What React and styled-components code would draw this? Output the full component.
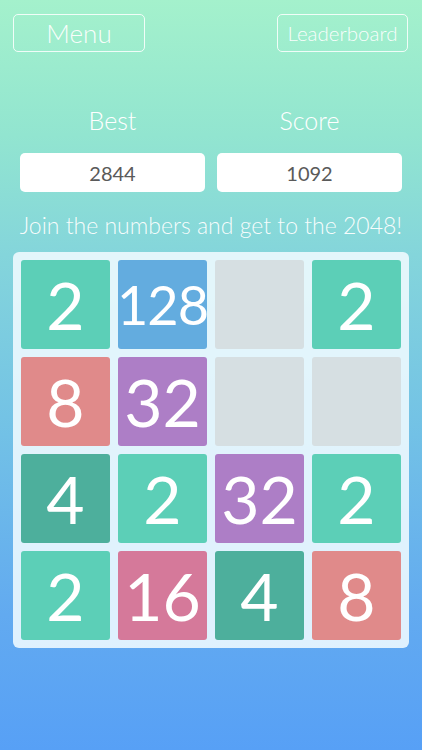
import React from "react";
import styled, { createGlobalStyle } from "styled-components";

const GlobalStyle = createGlobalStyle`
  html, body {
    margin: 0;
    padding: 0;
  }
  body {
    font-family: "Lato", "Open Sans", sans-serif;
  }
`;

const board = [
  [2, 128, 0, 2],
  [8, 32, 0, 0],
  [4, 2, 32, 2],
  [2, 16, 4, 8],
];

const tileColors = {
  0: "#d6dfe2",
  2: "#5ccfb7",
  4: "#4daf9c",
  8: "#e08a8a",
  16: "#d5799a",
  32: "#ad7ec6",
  128: "#63acdf",
};

const App = () => {
  return (
    <Screen>
      <GlobalStyle />
      <TopBar>
        <OutlineButton $w={132} $size={26}>Menu</OutlineButton>
        <OutlineButton $w={131} $size={20.5}>Leaderboard</OutlineButton>
      </TopBar>
      <Scores>
        <ScoreCol>
          <Label>Best</Label>
          <ScoreBox>2844</ScoreBox>
        </ScoreCol>
        <ScoreCol>
          <Label>Score</Label>
          <ScoreBox>1092</ScoreBox>
        </ScoreCol>
      </Scores>
      <Tagline>Join the numbers and get to the 2048!</Tagline>
      <Board>
        {board.flat().map((v, i) => (
          <Tile key={i} $bg={tileColors[v]} $small={v >= 100}>
            {v ? v : ""}
          </Tile>
        ))}
      </Board>
    </Screen>
  );
};

const Screen = styled.div`
  width: 422px;
  height: 750px;
  overflow: hidden;
  background: linear-gradient(
    180deg,
    #a4f1cc 0%,
    #92e5d0 18%,
    #84d5db 34%,
    #72c1e6 58%,
    #62aaf0 82%,
    #57a0f6 100%
  );
  display: flex;
  flex-direction: column;
`;

const TopBar = styled.div`
  display: flex;
  justify-content: space-between;
  padding: 14px 14px 0 13px;
`;

const OutlineButton = styled.div`
  width: ${(p) => p.$w}px;
  height: 38px;
  box-sizing: border-box;
  border: 1.5px solid rgba(255, 255, 255, 0.85);
  border-radius: 5px;
  color: rgba(255, 255, 255, 0.95);
  font-size: ${(p) => p.$size}px;
  font-weight: 300;
  display: flex;
  align-items: center;
  justify-content: center;
  white-space: nowrap;
`;

const Scores = styled.div`
  display: flex;
  justify-content: space-between;
  padding: 0 20px;
  margin-top: 53px;
`;

const ScoreCol = styled.div`
  width: 185px;
  display: flex;
  flex-direction: column;
  align-items: center;
`;

const Label = styled.div`
  color: #ffffff;
  font-size: 25px;
  font-weight: 300;
  height: 30px;
  line-height: 30px;
`;

const ScoreBox = styled.div`
  margin-top: 18px;
  width: 100%;
  height: 39px;
  background: #ffffff;
  border-radius: 5px;
  color: #5a5a5a;
  font-size: 20px;
  font-weight: 400;
  display: flex;
  align-items: center;
  justify-content: center;
`;

const Tagline = styled.div`
  margin-top: 19px;
  text-align: center;
  color: rgba(255, 255, 255, 0.95);
  font-size: 23px;
  font-weight: 300;
  height: 28px;
  line-height: 28px;
  white-space: nowrap;
`;

const Board = styled.div`
  margin: 13px 0 0 13px;
  width: 396px;
  box-sizing: border-box;
  padding: 8px;
  background: rgba(240, 250, 255, 0.88);
  border-radius: 6px;
  display: grid;
  grid-template-columns: repeat(4, 89px);
  grid-auto-rows: 89px;
  gap: 8px;
`;

const Tile = styled.div`
  background: ${(p) => p.$bg};
  border-radius: 3px;
  color: #ffffff;
  font-size: ${(p) => (p.$small ? "54px" : "66px")};
  font-weight: 400;
  letter-spacing: ${(p) => (p.$small ? "-1px" : "0")};
  display: flex;
  align-items: center;
  justify-content: center;
  line-height: 1;
`;

export default App;
